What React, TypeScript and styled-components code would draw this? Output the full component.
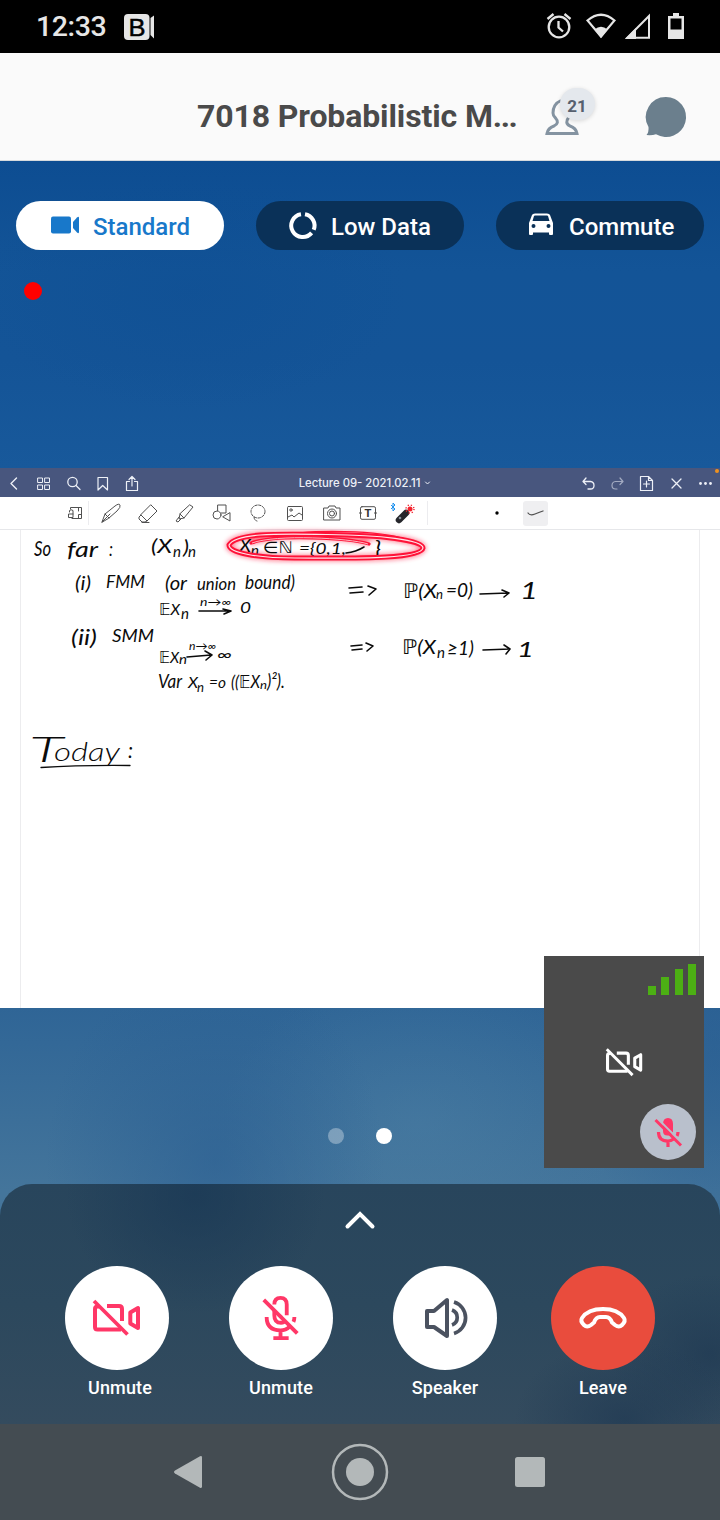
import React from "react";
import styled, { createGlobalStyle } from "styled-components";

const Global = createGlobalStyle`
  * { box-sizing: border-box; }
  html, body { margin: 0; padding: 0; background: #000; }
  body { font-family: Roboto, "Liberation Sans", sans-serif; }
  svg { display: block; flex: none; overflow: visible; }
`;

const Phone = styled.div`
  width: 720px;
  height: 1520px;
  display: flex;
  flex-direction: column;
  overflow: hidden;
`;

const StatusBar = styled.div`
  height: 53px;
  flex: none;
  background: #000;
  color: #e6e6e6;
  display: flex;
  align-items: center;
  justify-content: space-between;
  padding: 0 34px 0 36px;
`;

const StatusGroup = styled.div<{ $gap: number }>`
  display: flex;
  align-items: center;
  gap: ${(p) => p.$gap}px;
`;

const Clock = styled.span`
  font-size: 28.5px;
  font-weight: 500;
  line-height: 55px;
  letter-spacing: -0.4px;
  width: 71px;
  white-space: nowrap;
`;

const Header = styled.header`
  height: 108px;
  flex: none;
  background: #fafafa;
  border-bottom: 1px solid #d6dadd;
  display: flex;
  align-items: center;
  padding: 20px 34px 0 197px;
`;

const Title = styled.h1`
  margin: 0;
  width: 348px;
  padding-bottom: 2px;
  font-size: 32px;
  font-weight: 700;
  color: #4a4a4a;
  line-height: 40px;
  letter-spacing: -0.12px;
  white-space: nowrap;
`;

const Ellipsis = styled.span`
  letter-spacing: -1.4px;
`;

const People = styled.div`
  position: relative;
  width: 101px;
  height: 40px;
`;

const Count = styled.span`
  position: absolute;
  left: 15px;
  top: -9px;
  width: 35px;
  height: 32px;
  border-radius: 16px;
  background: #e4e8ed;
  box-shadow: 0 1px 4px rgba(0, 0, 0, 0.14);
  color: #56606f;
  font-size: 17px;
  font-weight: 700;
  line-height: 36px;
  text-align: center;
  padding-right: 1px;
`;

const Stage = styled.main`
  position: relative;
  flex: 1;
  display: flex;
  flex-direction: column;
  background:
    radial-gradient(ellipse 170px 200px at 215px 1000px, rgba(38, 91, 145, 0.5), transparent),
    radial-gradient(ellipse 130px 220px at 715px 900px, rgba(38, 91, 145, 0.5), transparent),
    radial-gradient(ellipse 200px 150px at 420px 960px, rgba(84, 136, 170, 0.3), transparent),
    radial-gradient(ellipse 220px 120px at 190px 130px, rgba(12, 76, 146, 0.35), transparent),
    linear-gradient(#0d4d92 0px, #135497 110px, #145497 200px, #18599b 307px, #2f6596 847px, #44759b 1030px, #47779b 1263px);
`;

const Modes = styled.div`
  display: flex;
  gap: 32px;
  padding: 40px 16px 0;
`;

const Mode = styled.button<{ $active?: boolean }>`
  width: 208px;
  height: 49px;
  border: 0;
  border-radius: 25px;
  display: flex;
  align-items: center;
  padding: 0 0 0 32px;
  background: ${(p) => (p.$active ? "#fff" : "#0a3158")};
  color: ${(p) => (p.$active ? "#1878ca" : "#fff")};
  font: 500 24px/49px Roboto, sans-serif;
`;

const ModeLabel = styled.span`
  margin-left: 13px;
  padding-top: 3px;
`;

const Recording = styled.div`
  width: 18px;
  height: 18px;
  border-radius: 50%;
  background: #f00;
  margin: 32px 0 168px 24px;
`;

const Shared = styled.section`
  height: 540px;
  background: #fff;
  display: flex;
  flex-direction: column;
`;

const DocBar = styled.div`
  position: relative;
  height: 29px;
  flex: none;
  background: #48567e;
  color: #edf0f7;
  display: flex;
  align-items: center;
  justify-content: space-between;
  padding: 1px 7px 0;
`;

const IconRow = styled.div<{ $gap: number }>`
  display: flex;
  align-items: center;
  gap: ${(p) => p.$gap}px;
`;

const DocTitle = styled.div`
  display: flex;
  align-items: center;
  gap: 5px;
  font: 500 11.3px/29px Inter, sans-serif;
  margin-left: 9px;
`;

const Notice = styled.i`
  position: absolute;
  right: 1px;
  top: 1px;
  width: 4px;
  height: 4px;
  border-radius: 50%;
  background: #f0921e;
`;

const Tools = styled.div`
  height: 33px;
  flex: none;
  border-bottom: 1px solid #e6e7ea;
  display: flex;
  align-items: center;
  padding-left: 64px;
  color: #505050;
`;

const Tool = styled.span<{ $w: number; $lead?: number }>`
  width: ${(p) => p.$w}px;
  height: 24px;
  padding-left: ${(p) => p.$lead || 0}px;
  display: flex;
  justify-content: center;
  align-items: center;
`;

const Divider = styled.span`
  width: 1px;
  height: 24px;
  background: #ececef;
`;

const StrokeChip = styled.span`
  width: 25px;
  height: 25px;
  border-radius: 3px;
  background: #efeff1;
  display: flex;
  align-items: center;
  justify-content: center;
`;

const Paper = styled.div`
  flex: 1;
  margin: 0 20px 0 20px;
  border-left: 1px solid #ececee;
  border-right: 1px solid #ececee;
`;

const Pager = styled.div`
  height: 176px;
  display: flex;
  justify-content: center;
  gap: 32px;
  padding-top: 120px;
`;

const Dot = styled.span<{ $on?: boolean }>`
  width: 16px;
  height: 16px;
  border-radius: 50%;
  background: ${(p) => (p.$on ? "#fff" : "rgba(255,255,255,.33)")};
`;

const SelfView = styled.div`
  position: absolute;
  right: 16px;
  top: 795px;
  width: 160px;
  height: 212px;
  padding: 8px;
  background: #4a4a4a;
  display: flex;
  flex-direction: column;
  align-items: flex-end;
  justify-content: space-between;
`;

const Bars = styled.div`
  display: flex;
  align-items: flex-end;
  gap: 5.3px;
  height: 31px;
`;

const Bar = styled.i<{ $h: number }>`
  width: 8px;
  height: ${(p) => p.$h}px;
  background: #4caf14;
`;

const Centered = styled.div`
  align-self: center;
  margin-top: 25px;
`;

const MutedBadge = styled.div`
  width: 56px;
  height: 56px;
  border-radius: 50%;
  background: #b9c0cc;
  display: flex;
  align-items: center;
  justify-content: center;
`;

const Panel = styled.footer`
  height: 240px;
  border-radius: 32px 32px 0 0;
  display: flex;
  flex-direction: column;
  align-items: center;
  background:
    radial-gradient(ellipse 130px 120px at 195px 10px, rgba(25, 56, 85, 0.7), transparent),
    radial-gradient(ellipse 110px 80px at 625px 235px, rgba(30, 56, 82, 0.65), transparent),
    radial-gradient(ellipse 100px 80px at 710px 170px, rgba(30, 56, 82, 0.65), transparent),
    linear-gradient(#28455c, #2c485d 50%, #344b5e);
`;

const Chevron = styled.div`
  height: 82px;
  padding-top: 26px;
`;

const Controls = styled.div`
  align-self: stretch;
  display: grid;
  grid-template-columns: 164px 164px 164px 152px;
  padding-left: 35px;
`;

const Control = styled.div`
  display: flex;
  flex-direction: column;
  align-items: center;
`;

const Round = styled.button<{ $danger?: boolean }>`
  width: 104px;
  height: 104px;
  border: 0;
  border-radius: 50%;
  padding: 0;
  display: flex;
  align-items: center;
  justify-content: center;
  background: ${(p) => (p.$danger ? "#e94c3d" : "#fff")};
`;

const Caption = styled.span<{ $shift?: number }>`
  margin-top: 7px;
  padding-left: ${(p) => p.$shift || 0}px;
  color: #fff;
  font-size: 18px;
  font-weight: 500;
  line-height: 22px;
  letter-spacing: 0.12px;
`;

const NavBar = styled.nav`
  height: 96px;
  flex: none;
  background: #444c52;
  display: flex;
  align-items: center;
  padding-left: 174px;
`;

const line = (w: number) => ({
  fill: "none",
  stroke: "currentColor",
  strokeWidth: w,
  strokeLinecap: "round" as const,
  strokeLinejoin: "round" as const,
});

const StatusIcons = () => (
  <svg width="140" height="30" viewBox="546 12 140 30" fill="#e6e6e6">
    <g fill="none" stroke="#e6e6e6" strokeWidth="2.3">
      <circle cx="559" cy="27" r="10.3" />
      <path d="M558.5 21v6.5l4.500 4M547.500 19l6-5M570.500 19l-6-5" />
      <path d="M587.500 20.500Q601 9 614.500 20.500L601 36.500Z" strokeWidth="2.200" />
      <path d="M649 16v21.700h-21.700Z" strokeWidth="2" />
    </g>
    <path d="M594.500 29.500Q601 24 607.500 29.500L601 38Z" />
    <path d="M625 39L636 28V39Z" />
    <path d="M673 13h6v3h5v23h-16V16h5zM670.500 18.500v11h11v-11z" fillRule="evenodd" />
  </svg>
);

const VideoOff = ({ color, w = 48 }: { color: string; w?: number }) => (
  <svg width={w} height={(w * 40) / 48} viewBox="0 0 48 40" fill="none" stroke={color} strokeWidth="4">
    <path d="M6 8.500H4.500Q2 8.500 2 11V29Q2 31.500 4.500 31.500H28M14 8H26Q29 8 29 11V23" />
    <path d="M37.300 14.500L45 10V30L37.300 25.500Z" strokeLinejoin="round" />
    <path d="M1 3L34.500 36.500" strokeWidth="3.700" />
  </svg>
);

const MicOff = () => (
  <svg width="40" height="44" viewBox="0 0 40 46" fill="none" stroke="#ff3767" strokeWidth="4">
    <path d="M13 9Q13 2 19.500 2Q26 2 26 9V20M13 15V20Q13 28 20 28Q23 28 24 26" />
    <path d="M5 22Q5 36 19.500 36Q25 36 29 32M34 22Q34 25 33 27M19.500 36V43M12 44H28" />
    <path d="M19 19.500Q19 22 21.500 22" strokeWidth="2.500" />
    <path d="M2 4L37 39" />
  </svg>
);

const MicSmall = () => (
  <svg width="28" height="30" viewBox="0 0 28 30">
    <path d="M9 7Q9 1 14 1T19 7V15L17 18Q9 20 9 14Z" fill="#ff3767" />
    <path d="M4.500 15Q4.500 24 14 24Q17 24 19.500 22M24 15Q24 17 23 19M14 24V30" fill="none" stroke="#ff3767" strokeWidth="3.200" />
    <path d="M3.500 1.500L28 26" stroke="#b9c0cc" strokeWidth="2" />
    <path d="M1.500 3L27 28.500" stroke="#ff3767" strokeWidth="3" />
  </svg>
);

type Word = [string, number, number, number, number];

/* text, x, baseline, size, width */
const words: Word[] = [
  ["So", 34, 556, 22, 17],
  ["far", 67, 557, 22, 31],
  [":", 109, 556, 19, 4],
  ["(X", 151, 553, 20, 21],
  ["n", 173, 557, 15, 8],
  [")", 183, 554, 20, 6],
  ["n", 188, 557, 15, 8],
  ["X", 239, 552, 17, 12],
  ["n", 251, 555, 14, 8],
  ["∈ℕ", 263, 553, 16, 30],
  ["={0,1,", 299, 554, 16, 47],
  ["}", 374, 555, 19, 7],
  ["(i)", 75, 590, 20, 16],
  ["FMM", 106, 588, 18, 39],
  ["(or", 165, 590, 19, 22],
  ["union", 197, 590, 18, 39],
  ["bound)", 245, 589, 20, 50],
  ["𝔼X", 159, 615, 16, 21],
  ["n", 181, 619, 15, 8],
  ["n→∞", 200, 606, 11, 31],
  ["0", 240, 613, 16, 11],
  ["(ii)", 71, 645, 21, 26],
  ["SMM", 112, 642, 17, 42],
  ["𝔼X", 159, 663, 16, 20],
  ["n", 179, 664, 13, 8],
  ["n→∞", 189, 650, 11, 27],
  ["∞", 217, 660, 15, 15],
  ["Var", 158, 688, 19, 24],
  ["X", 188, 688, 16, 10],
  ["n", 197, 692, 14, 7],
  ["=o", 209, 688, 15, 17],
  ["((𝔼X", 231, 688, 17, 29],
  ["n", 260, 689, 12, 7],
  [")²).", 267, 688, 19, 18],
  ["ℙ(X", 403, 598, 20, 34],
  ["n", 436, 599, 13, 7],
  ["=0)", 446, 597, 20, 27],
  ["1", 520, 599, 23, 18],
  ["ℙ(X", 402, 654, 20, 34],
  ["n", 437, 658, 15, 8],
  ["≥1)", 447, 655, 20, 27],
  ["1", 517, 657, 21, 17],
  ["T", 29, 762, 35, 34],
  ["oday", 54, 761, 26, 66],
  [":", 128, 758, 22, 5],
];

const lasso =
  "M229 545C236 532 285 534 328 534.500C380 535 423 540 423 548C421 560 344 558 295 558C258 558 229 553 229 545Z";

const Notes = () => (
  <svg width="678" height="478" viewBox="21 530 678 478">
    <defs>
      <filter id="glow" x="-10%" y="-50%" width="120%" height="200%">
        <feGaussianBlur stdDeviation="2.400" />
      </filter>
    </defs>
    <g filter="url(#glow)" fill="none" stroke="#ff1238" opacity=".6" strokeWidth="6">
      <path d={lasso} />
      <path d="M250 542C280 532 350 536 369 543" />
    </g>
    <g fill="#0b0b0b" fontFamily='Lato, "DejaVu Sans", sans-serif' fontStyle="italic">
      {words.map(([t, x, y, size, w], i) => (
        <text
          key={i}
          x={x}
          y={y}
          fontSize={size}
          fontWeight={size > 25 ? 300 : 400}
          textLength={w}
          lengthAdjust="spacingAndGlyphs"
        >
          {t}
        </text>
      ))}
    </g>
    <g fill="none" stroke="#0b0b0b" strokeWidth="1.600" strokeLinecap="round" strokeLinejoin="round">
      <path d="M346 553Q356 552 364 547" />
      <path d="M349 588L362 587M350 593L363 592M368 586L376 589L369 595" />
      <path d="M351 646L362 645M352 650L362 649M366 643L373 646L367 651" />
      <path d="M199 611H230M223 609L231 611L224 614" />
      <path d="M187 657L211 655M205 651L212 655L206 660" />
      <path d="M480 594L508 593M502 590L509 593L504 597" />
      <path d="M483 650L510 649M504 645L510 649L506 654" />
      <path d="M41 767.500Q80 765 130 765.500" strokeWidth="1.300" />
    </g>
    <g fill="none" stroke="#ff1238">
      <path d={lasso} strokeWidth="5" />
      <path d="M251 543C276 534 350 538 369 544" strokeWidth="3.200" strokeLinecap="round" />
      <path d="M276 537C310 528 382 531 405 539" strokeWidth="1.500" />
      <path d={lasso} stroke="#ffe5e9" strokeWidth="1.200" />
      <path d="M252 543C276 534 350 538 368 544" stroke="#ffb5bf" />
    </g>
  </svg>
);

export default function App() {
  return (
    <>
      <Global />
      <Phone>
        <StatusBar>
          <StatusGroup $gap={17}>
            <Clock>12:33</Clock>
            <svg width="30" height="26" viewBox="0 0 30 26">
              <rect width="25.500" height="26" rx="4" fill="#e6e6e6" />
              <path d="M26.500 4L30 1.500V24.500L26.500 21Z" fill="#e6e6e6" />
              <text x="4.500" y="21.500" fontSize="24" fill="#000" stroke="#000" strokeWidth=".5" fontFamily="Liberation Sans, sans-serif" textLength="17" lengthAdjust="spacingAndGlyphs">B</text>
            </svg>
          </StatusGroup>
          <StatusIcons />
        </StatusBar>

        <Header>
          <Title>7018 Probabilistic M<Ellipsis>...</Ellipsis></Title>
          <People>
            <svg width="36" height="40" viewBox="0 0 36 40" fill="none" stroke="#8493a1" strokeWidth="3">
              <path d="M16 3.500Q8 7 8 16Q8 19 10.500 21Q15 26 9 29Q3 31 2 36.500H32Q31 31 25 29Q19 26 24 20" />
            </svg>
            <Count>21</Count>
          </People>
          <svg width="40" height="40" viewBox="0 0 40 40" fill="#6b7f8d">
            <path d="M20 0A20 20 0 1 1 10 37.300Q6 38.500 0.500 38Q3 35 2.500 30A20 20 0 0 1 20 0Z" />
          </svg>
        </Header>

        <Stage>
          <Modes>
            <Mode $active>
              <svg width="32" height="24" viewBox="0 0 32 24" fill="currentColor">
                <rect x="3" y="2.500" width="20" height="17" rx="2" />
                <path d="M25 8L29 3.500Q31 2 31 4V18Q31 20 29 18.500L25 14Z" />
              </svg>
              <ModeLabel>Standard</ModeLabel>
            </Mode>
            <Mode>
              <svg width="30" height="30" viewBox="0 0 30 30" fill="none" stroke="#fff" strokeWidth="4">
                <path d="M17 3.200A11.500 11.500 0 0 1 25.700 18.800M23.600 21.900A11.500 11.500 0 1 1 13 3.200" />
              </svg>
              <ModeLabel>Low Data</ModeLabel>
            </Mode>
            <Mode>
              <svg width="28" height="26" viewBox="0 0 28 26" fill="#fff">
                <path fillRule="evenodd" d="M1 10L4 2Q4.500 .5 7 .5H19Q21.500 .5 22 2L25 10V21Q25 22 24 22H22Q21 22 21 21V19.500H5V21Q5 22 4 22H2Q1 22 1 21ZM4.500 8H21.500L20 3Q19.800 2.500 19 2.500H7Q6.200 2.500 6 3ZM5.500 11A2 2 0 1 0 5.500 15A2 2 0 1 0 5.500 11ZM20.500 11A2 2 0 1 0 20.500 15A2 2 0 1 0 20.500 11Z" />
              </svg>
              <ModeLabel>Commute</ModeLabel>
            </Mode>
          </Modes>
          <Recording />

          <Shared>
            <DocBar>
              <IconRow $gap={14.3}>
                <svg width="15" height="15" viewBox="0 0 15 15" {...line(1.4)}><path d="M9.500 2L4 7.500L9.500 13" /></svg>
                <svg width="15" height="15" viewBox="0 0 15 15" {...line(1)}><path d="M2 2h4.500v4.500H2zM9 2h4.500v4.500H9zM2 9h4.500v4.500H2zM9 9h4.500v4.500H9z" /></svg>
                <svg width="15" height="15" viewBox="0 0 15 15" {...line(1.3)}><circle cx="6.500" cy="6" r="4.700" /><path d="M10 9.500L14 13.500" /></svg>
                <svg width="15" height="15" viewBox="0 0 15 15" {...line(1.2)}><path d="M3 1.500h9.500V14L7.700 9.500L3 14Z" /></svg>
                <svg width="15" height="15" viewBox="0 0 15 15" {...line(1.2)}><path d="M5.500 5.500H2.500V14.500H13.500V5.500H10.500M8 10V1M5 3.500L8 .5L11 3.500" /></svg>
              </IconRow>
              <DocTitle>
                Lecture 09- 2021.02.11
                <svg width="5" height="4" viewBox="0 0 5 4" {...line(1)}><path d="M.5 1L2.500 3L4.500 1" /></svg>
              </DocTitle>
              <IconRow $gap={14.3}>
                <svg width="15" height="15" viewBox="0 0 15 15" {...line(1.3)}><path d="M5 2L2 5.500L5 8.500M2.500 5.500H9.500Q13 6 13 9.500T9.500 13H7" /></svg>
                <svg width="15" height="15" viewBox="0 0 15 15" {...line(1.2)} opacity=".55"><path d="M10 2L13 5.500L10 8.500M12.500 5.500H5.500Q2 6 2 9.500T5.500 13H7" /></svg>
                <svg width="15" height="15" viewBox="0 0 15 15" {...line(1.2)}><path d="M1.500 .5H9.500L13.500 4.500V14.500H1.500ZM9.500 .5V4.500H13.500M4.500 8h6M7.500 5v6" /></svg>
                <svg width="15" height="15" viewBox="0 0 15 15" {...line(1.3)}><path d="M3 3L12 12M12 3L3 12" /></svg>
                <svg width="15" height="15" viewBox="0 0 15 15" fill="currentColor"><circle cx="2.500" cy="7.500" r="1.400" /><circle cx="7.500" cy="7.500" r="1.400" /><circle cx="12.500" cy="7.500" r="1.400" /></svg>
              </IconRow>
              <Notice />
            </DocBar>

            <Tools>
              <Tool $w={21}>
                <svg width="16" height="14" viewBox="0 0 16 14" {...line(1)}>
                  <path d="M3.500 3V1.500H14.500V12.500H5M11.500 12V8.500H14M11.500 2V5" />
                  <path d="M2.500 6V4.500Q4 3 6 4.500V11.500H1.500V8H6" />
                </svg>
              </Tool>
              <Tool $w={6}><Divider /></Tool>
              <Tool $w={39}>
                <svg width="20" height="20" viewBox="0 0 20 20" {...line(1)}><path d="M1 19L4 11L14 3Q18 0 19 2Q20 4 16 8L8 15ZM4 11L8 15M1 19L9 11" /></svg>
              </Tool>
              <Tool $w={36}>
                <svg width="20" height="19" viewBox="0 0 20 19" {...line(1)}><path d="M13 1L19 7L9 17L3 11ZM3 11L1 13V15L4 18H7L9 17M4 18.500H11" /></svg>
              </Tool>
              <Tool $w={37}>
                <svg width="19" height="19" viewBox="0 0 19 19" {...line(1)}><path d="M15 1L18 3L9 14L4 15L5 10ZM5 10L9 14M4 13L1 17L3 18L6 15" /></svg>
              </Tool>
              <Tool $w={37}>
                <svg width="19" height="18" viewBox="0 0 19 18" {...line(1)}><path d="M6 1H14V9H6ZM18 9V17L11 13Z" /><circle cx="5" cy="11" r="4" fill="#fff" /></svg>
              </Tool>
              <Tool $w={36}>
                <svg width="18" height="18" viewBox="0 0 18 18" {...line(1)} strokeDasharray="2.500 1.500"><ellipse cx="9" cy="7.500" rx="7" ry="6.500" /><path d="M5 13Q5 16 8 17" /></svg>
              </Tool>
              <Tool $w={37}>
                <svg width="16" height="15" viewBox="0 0 16 15" {...line(1)}><rect x=".5" y=".5" width="15" height="14" rx="1" /><circle cx="4" cy="4" r="1.200" /><path d="M1 11L5 9L7 11L12 7L15 9" /></svg>
              </Tool>
              <Tool $w={37}>
                <svg width="18" height="16" viewBox="0 0 18 16" {...line(1)}><path d="M1 3H5L6 1H12L13 3H17V15H1Z" /><circle cx="9" cy="8.500" r="4.500" /><circle cx="9" cy="8.500" r="2.500" /></svg>
              </Tool>
              <Tool $w={36}>
                <svg width="18" height="14" viewBox="0 0 18 14"><rect x="1.500" y=".7" width="15" height="12.600" rx="1.500" {...line(1)} /><path d="M0 7h3M15 7h3" stroke="currentColor" /><text x="9" y="11" textAnchor="middle" fontSize="11" fontWeight="700" fill="#333" fontFamily="Inter">T</text></svg>
              </Tool>
              <Tool $w={32}>
                <svg width="24" height="22" viewBox="0 0 24 22">
                  <path d="M1 3L5 7L3 9V1L5 3L1 7" fill="none" stroke="#2092ee" />
                  <path d="M9 18L16 11" stroke="#25262b" strokeWidth="6.500" strokeLinecap="round" />
                  <circle cx="10" cy="16" r="1.300" fill="#89909a" />
                  <circle cx="20" cy="7" r="2.500" fill="#f3212c" />
                  <circle cx="20" cy="7" r="4" fill="none" stroke="#f3212c" strokeWidth="1.400" strokeDasharray="1.200 2" />
                </svg>
              </Tool>
              <Tool $w={18}><Divider /></Tool>
              <Tool $w={87} $lead={34}>
                <svg width="4" height="4" viewBox="0 0 4 4"><circle cx="2" cy="2" r="1.700" /></svg>
              </Tool>
              <StrokeChip>
                <svg width="17" height="6" viewBox="0 0 17 6" {...line(1.3)}><path d="M1 3Q3 6 8 4T16 1" /></svg>
              </StrokeChip>
            </Tools>
            <Paper><Notes /></Paper>
          </Shared>

          <Pager><Dot /><Dot $on /></Pager>

          <Panel>
            <Chevron>
              <svg width="30" height="20" viewBox="0 0 30 20" fill="none" stroke="#fff" strokeWidth="4" strokeLinecap="round">
                <path d="M2.500 16.500L15 4L27.500 16.500" />
              </svg>
            </Chevron>
            <Controls>
              <Control>
                <Round><VideoOff color="#ff3767" /></Round>
                <Caption $shift={6}>Unmute</Caption>
              </Control>
              <Control>
                <Round><MicOff /></Round>
                <Caption>Unmute</Caption>
              </Control>
              <Control>
                <Round>
                  <svg width="44" height="42" viewBox="0 0 44 42" fill="none" stroke="#4b5260" strokeWidth="4">
                    <path d="M4 14H11L24 3V39L11 30H4Z" strokeLinejoin="round" />
                    <path d="M29 13A8 8 0 0 1 29 28M31 5A16.500 16.500 0 0 1 31 36.500" strokeWidth="3.700" />
                  </svg>
                </Round>
                <Caption>Speaker</Caption>
              </Control>
              <Control>
                <Round $danger>
                  <svg width="48" height="24" viewBox="0 0 48 24" fill="none" stroke="#fff" strokeWidth="4" strokeLinejoin="round">
                    <path d="M3 12Q9 3 24 3T45 12Q47 15 43 19Q40 22 36 19L33 16.500Q31 11 27 11H21Q17 11 15 16.500L12 19Q8 22 5 19Q1 15 3 12Z" />
                  </svg>
                </Round>
                <Caption>Leave</Caption>
              </Control>
            </Controls>
          </Panel>

          <SelfView>
            <Bars><Bar $h={9} /><Bar $h={18} /><Bar $h={26} /><Bar $h={31} /></Bars>
            <Centered><VideoOff color="#fff" w={37} /></Centered>
            <MutedBadge><MicSmall /></MutedBadge>
          </SelfView>
        </Stage>

        <NavBar>
          <svg width="384" height="60" viewBox="174 1442 384 60" fill="#b3b8b9">
            <path d="M175 1470.500L200 1456.300Q202 1455.500 202 1457.500V1486.500Q202 1488.500 200 1487.700L175 1473.500Q173 1472 175 1470.500Z" />
            <circle cx="360" cy="1472" r="14" />
            <circle cx="360" cy="1472" r="27" fill="none" stroke="#b3b8b9" strokeWidth="2.500" />
            <rect x="515" y="1457" width="30" height="30" rx="2.500" />
          </svg>
        </NavBar>
      </Phone>
    </>
  );
}
